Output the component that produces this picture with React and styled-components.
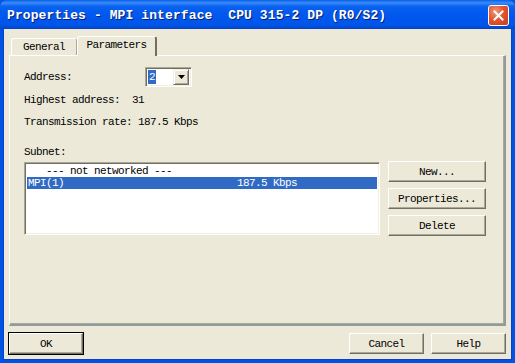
import React from 'react';
import styled, { createGlobalStyle } from 'styled-components';

const GlobalStyle = createGlobalStyle`
  html, body {
    margin: 0;
    padding: 0;
    background: #ECE9D8;
  }
`;

const mono = `"Liberation Mono", "DejaVu Sans Mono", monospace`;

const Window = styled.div`
  width: 515px;
  height: 363px;
  display: flex;
  flex-direction: column;
  background: #0054E3;
  box-sizing: border-box;
  font-family: ${mono};
  font-size: 11px;
  letter-spacing: -0.6px;
  color: #000;
  overflow: hidden;
`;

const TitleBar = styled.div`
  height: 29px;
  flex: none;
  display: flex;
  align-items: center;
  padding: 0 6px 0 7px;
  background: linear-gradient(
    #0A5FE8 0%,
    #3A8CF9 10%,
    #0A62F1 22%,
    #0058EE 50%,
    #0055EA 85%,
    #0046C8 100%
  );
  border-radius: 7px 7px 0 0;
`;

const Title = styled.div`
  flex: 1;
  color: #fff;
  font-weight: bold;
  font-size: 13px;
  letter-spacing: 0.1px;
  white-space: pre;
  text-shadow: 1px 1px 0 #0A1E6E;
  margin-top: 1px;
`;

const CloseButton = styled.div`
  width: 21px;
  height: 21px;
  margin-top: 2px;
  border: 1px solid #fff;
  border-radius: 3px;
  box-sizing: border-box;
  background: radial-gradient(circle at 35% 30%, #F09A7C 0%, #E3552F 45%, #C43E1C 100%);
  display: flex;
  align-items: center;
  justify-content: center;
`;

const Frame = styled.div`
  flex: 1;
  display: flex;
  flex-direction: column;
  margin: 0 4px 4px 4px;
  background: #ECE9D8;
  padding: 6px 5px 0 5px;
  box-shadow: 0 0 0 1px #0841C8;
`;

const TabStrip = styled.div`
  height: 20px;
  display: flex;
  align-items: flex-end;
  padding-left: 2px;
`;

const Tab = styled.div`
  width: ${p => p.$w}px;
  height: ${p => (p.$active ? 20 : 17)}px;
  box-sizing: border-box;
  display: flex;
  align-items: center;
  justify-content: center;
  border-top: 1px solid #fff;
  border-left: 1px solid #fff;
  border-right: ${p => (p.$active ? '2px solid #716F64' : '1px solid #ACA899')};
  border-radius: 3px 3px 0 0;
  background: #ECE9D8;
  margin-bottom: ${p => (p.$active ? -1 : 0)}px;
  position: relative;
  z-index: ${p => (p.$active ? 1 : 0)};
  padding-bottom: ${p => (p.$active ? 3 : 0)}px;
`;

const Panel = styled.div`
  height: 271px;
  box-sizing: border-box;
  border-top: 1px solid #fff;
  border-left: 1px solid #fff;
  border-right: 2px solid #919B9C;
  border-bottom: 2px solid #919B9C;
  box-shadow: inset -1px -1px 0 #ACA899;
  padding: 11px 0 0 14px;
  display: flex;
  flex-direction: column;
`;

const Line = styled.div`
  height: 12px;
  line-height: 12px;
  white-space: pre;
  margin-top: ${p => p.$gap || 0}px;
`;

const FieldRow = styled.div`
  display: flex;
  align-items: center;
  height: 20px;
`;

const FieldLabel = styled.div`
  width: 121px;
`;

const Combo = styled.div`
  width: 47px;
  height: 20px;
  box-sizing: border-box;
  border-top: 1px solid #ACA899;
  border-left: 1px solid #ACA899;
  border-right: 1px solid #fff;
  border-bottom: 1px solid #fff;
  box-shadow: inset 1px 1px 0 #716F64, inset -1px -1px 0 #F1EFE2;
  background: #fff;
  display: flex;
  align-items: center;
  padding: 2px;
`;

const ComboValue = styled.div`
  flex: 1;
  display: flex;
  align-items: center;
  height: 100%;
`;

const Selected = styled.span`
  background: #316AC5;
  color: #fff;
  padding: 0 1px;
  line-height: 14px;
`;

const ComboArrow = styled.div`
  width: 16px;
  height: 16px;
  box-sizing: border-box;
  background: #ECE9D8;
  border-top: 1px solid #F1EFE2;
  border-left: 1px solid #F1EFE2;
  border-right: 1px solid #716F64;
  border-bottom: 1px solid #716F64;
  box-shadow: inset 1px 1px 0 #fff, inset -1px -1px 0 #ACA899;
  display: flex;
  align-items: center;
  justify-content: center;
`;

const SubnetRow = styled.div`
  display: flex;
  align-items: flex-start;
  gap: 8px;
  margin-top: 3px;
`;

const ListBox = styled.div`
  width: 356px;
  height: 73px;
  margin-top: 1px;
  box-sizing: border-box;
  border-top: 1px solid #ACA899;
  border-left: 1px solid #ACA899;
  border-right: 1px solid #fff;
  border-bottom: 1px solid #fff;
  box-shadow: inset 1px 1px 0 #716F64, inset -1px -1px 0 #F1EFE2;
  background: #fff;
  padding: 2px;
  display: flex;
  flex-direction: column;
`;

const ListItem = styled.div`
  height: 12px;
  line-height: 12px;
  display: flex;
  white-space: pre;
  padding-left: ${p => p.$indent || 1}px;
  background: ${p => (p.$selected ? '#316AC5' : 'transparent')};
  color: ${p => (p.$selected ? '#fff' : '#000')};
`;

const ListCell = styled.span`
  width: ${p => p.$w}px;
  flex: none;
`;

const ButtonColumn = styled.div`
  display: flex;
  flex-direction: column;
  gap: 6px;
`;

const Button = styled.div`
  width: ${p => p.$w || 98}px;
  height: 21px;
  box-sizing: border-box;
  display: flex;
  align-items: center;
  justify-content: center;
  background: #ECE9D8;
  border-top: 1px solid #fff;
  border-left: 1px solid #fff;
  border-right: 1px solid #716F64;
  border-bottom: 1px solid #716F64;
  box-shadow: ${p =>
    p.$default
      ? '0 0 0 1px #000, inset -1px -1px 0 #ACA899'
      : 'inset -1px -1px 0 #ACA899'};
`;

const Footer = styled.div`
  display: flex;
  align-items: center;
  gap: 7px;
  margin-top: 7px;
`;

const Spacer = styled.div`
  flex: 1;
`;

const App = () => {
  return (
    <>
      <GlobalStyle />
      <Window>
        <TitleBar>
          <Title>Properties - MPI interface  CPU 315-2 DP (R0/S2)</Title>
          <CloseButton>
            <svg width="11" height="11" viewBox="0 0 11 11">
              <path d="M1.5 1.5 L9.5 9.5 M9.5 1.5 L1.5 9.5" stroke="#fff" strokeWidth="2" strokeLinecap="square" />
            </svg>
          </CloseButton>
        </TitleBar>
        <Frame>
          <TabStrip>
            <Tab $w={66}>General</Tab>
            <Tab $w={80} $active>Parameters</Tab>
          </TabStrip>
          <Panel>
            <FieldRow>
              <FieldLabel>Address:</FieldLabel>
              <Combo>
                <ComboValue>
                  <Selected>2</Selected>
                </ComboValue>
                <ComboArrow>
                  <svg width="7" height="4" viewBox="0 0 7 4">
                    <path d="M0 0 H7 L3.5 4 Z" fill="#000" />
                  </svg>
                </ComboArrow>
              </Combo>
            </FieldRow>
            <Line $gap={7}>Highest address:  31</Line>
            <Line $gap={10}>Transmission rate: 187.5 Kbps</Line>
            <Line $gap={18}>Subnet:</Line>
            <SubnetRow>
              <ListBox>
                <ListItem $indent={19}>--- not networked ---</ListItem>
                <ListItem $selected>
                  <ListCell $w={209}>MPI(1)</ListCell>
                  <span>187.5 Kbps</span>
                </ListItem>
              </ListBox>
              <ButtonColumn>
                <Button>New...</Button>
                <Button>Properties...</Button>
                <Button>Delete</Button>
              </ButtonColumn>
            </SubnetRow>
          </Panel>
          <Footer>
            <Button $w={74} $default>OK</Button>
            <Spacer />
            <Button $w={75}>Cancel</Button>
            <Button $w={75}>Help</Button>
          </Footer>
        </Frame>
      </Window>
    </>
  );
};

export default App;
